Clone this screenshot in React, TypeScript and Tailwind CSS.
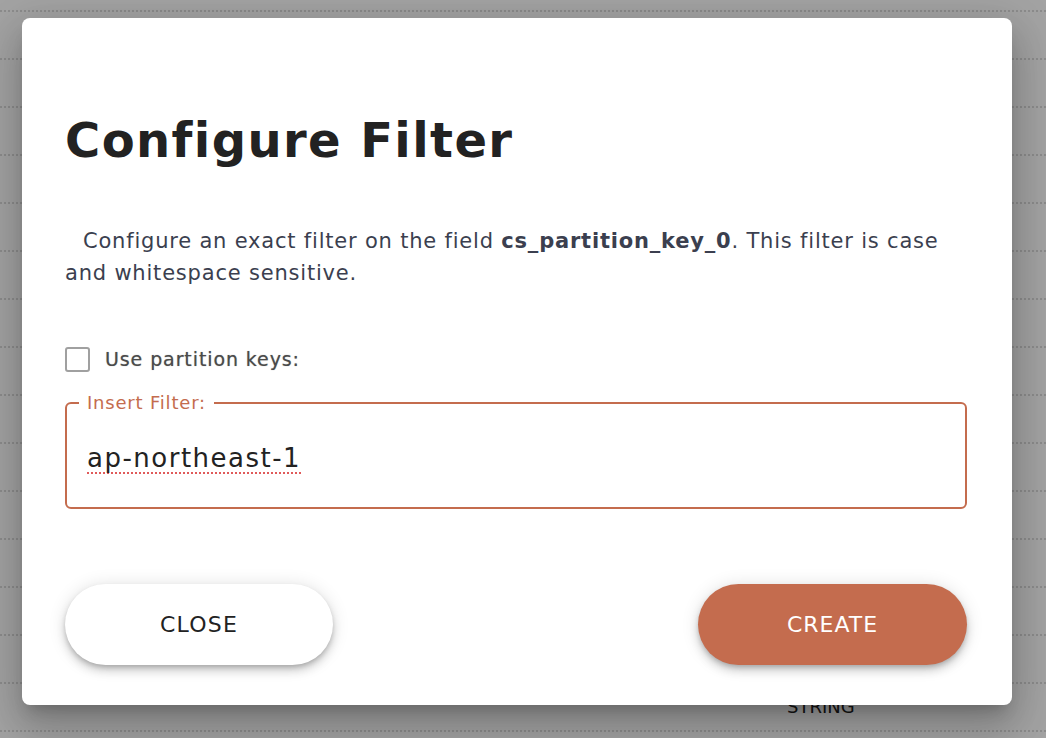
import React from "react";

const rows = Array.from({ length: 16 });

export default function App() {
  return (
    <div className="relative w-[1046px] h-[738px] overflow-hidden bg-white" style={{ fontFamily: "'DejaVu Sans', sans-serif" }}>
      {/* background table */}
      <div className="flex flex-col">
        {rows.map((_, i) => (
          <div key={i} className="h-[48px] border-b-2 border-dotted border-[#dcdcdc] flex items-end first:h-[12px]">
            {i === 15 ? <span className="ml-[787px] mb-[14px] text-[18px] text-[#222] leading-none">STRING</span> : null}
          </div>
        ))}
      </div>
      {/* overlay */}
      <div className="absolute inset-0 bg-black/[0.36]" />
      {/* modal */}
      <div className="absolute left-[22px] top-[18px] w-[990px] h-[687px] bg-white rounded-[8px] shadow-[0_11px_15px_-7px_rgba(0,0,0,0.2),0_24px_38px_3px_rgba(0,0,0,0.14),0_9px_46px_8px_rgba(0,0,0,0.12)] pl-[43px] pr-[45px] pt-[92px] flex flex-col">
        <h1 className="text-[48px] leading-[60px] font-bold text-[#222] tracking-[1.4px]">Configure Filter</h1>
        <p className="mt-[55px] indent-[18px] text-[21px] leading-[32px] text-[#3b3f4f] tracking-[0.8px]">
          Configure an exact filter on the field <b className="font-bold">cs_partition_key_0</b>. This filter is case and whitespace sensitive.
        </p>
        <div className="mt-[56px] flex items-center gap-[15px]">
          <div className="w-[25px] h-[25px] rounded-[3px] border-2 border-[#a0a0a0] bg-white" />
          <span className="text-[19px] text-[#4a4a4a] tracking-[0.9px] [text-shadow:0_0_1px_rgba(0,0,0,0.4)]">Use partition keys:</span>
        </div>
        <fieldset className="mt-[20px] h-[115px] border-2 border-[#c46c4e] rounded-[6px] pl-[12px] pr-[20px] pb-0">
          <legend className="px-[8px] text-[18px] leading-[18px] tracking-[0.8px] text-[#c46c4e]">Insert Filter:</legend>
          <div className="mt-[30px] ml-[8px] text-[26px] leading-[32px] tracking-[1.5px] text-[#222] underline decoration-dotted decoration-[#e05a5a] decoration-2 underline-offset-[6px] w-fit">ap-northeast-1</div>
        </fieldset>
        <div className="mt-[75px] flex justify-between">
          <button className="w-[268px] h-[81px] rounded-full bg-white text-[22px] tracking-[1.2px] text-[#222] shadow-[0_3px_5px_-1px_rgba(0,0,0,0.2),0_6px_10px_0_rgba(0,0,0,0.14),0_1px_18px_0_rgba(0,0,0,0.12)]">CLOSE</button>
          <button className="w-[269px] h-[81px] rounded-full bg-[#c46c4e] text-[22px] tracking-[1px] text-white font-medium shadow-[0_3px_5px_-1px_rgba(0,0,0,0.2),0_6px_10px_0_rgba(0,0,0,0.14),0_1px_18px_0_rgba(0,0,0,0.12)]">CREATE</button>
        </div>
      </div>
    </div>
  );
}
